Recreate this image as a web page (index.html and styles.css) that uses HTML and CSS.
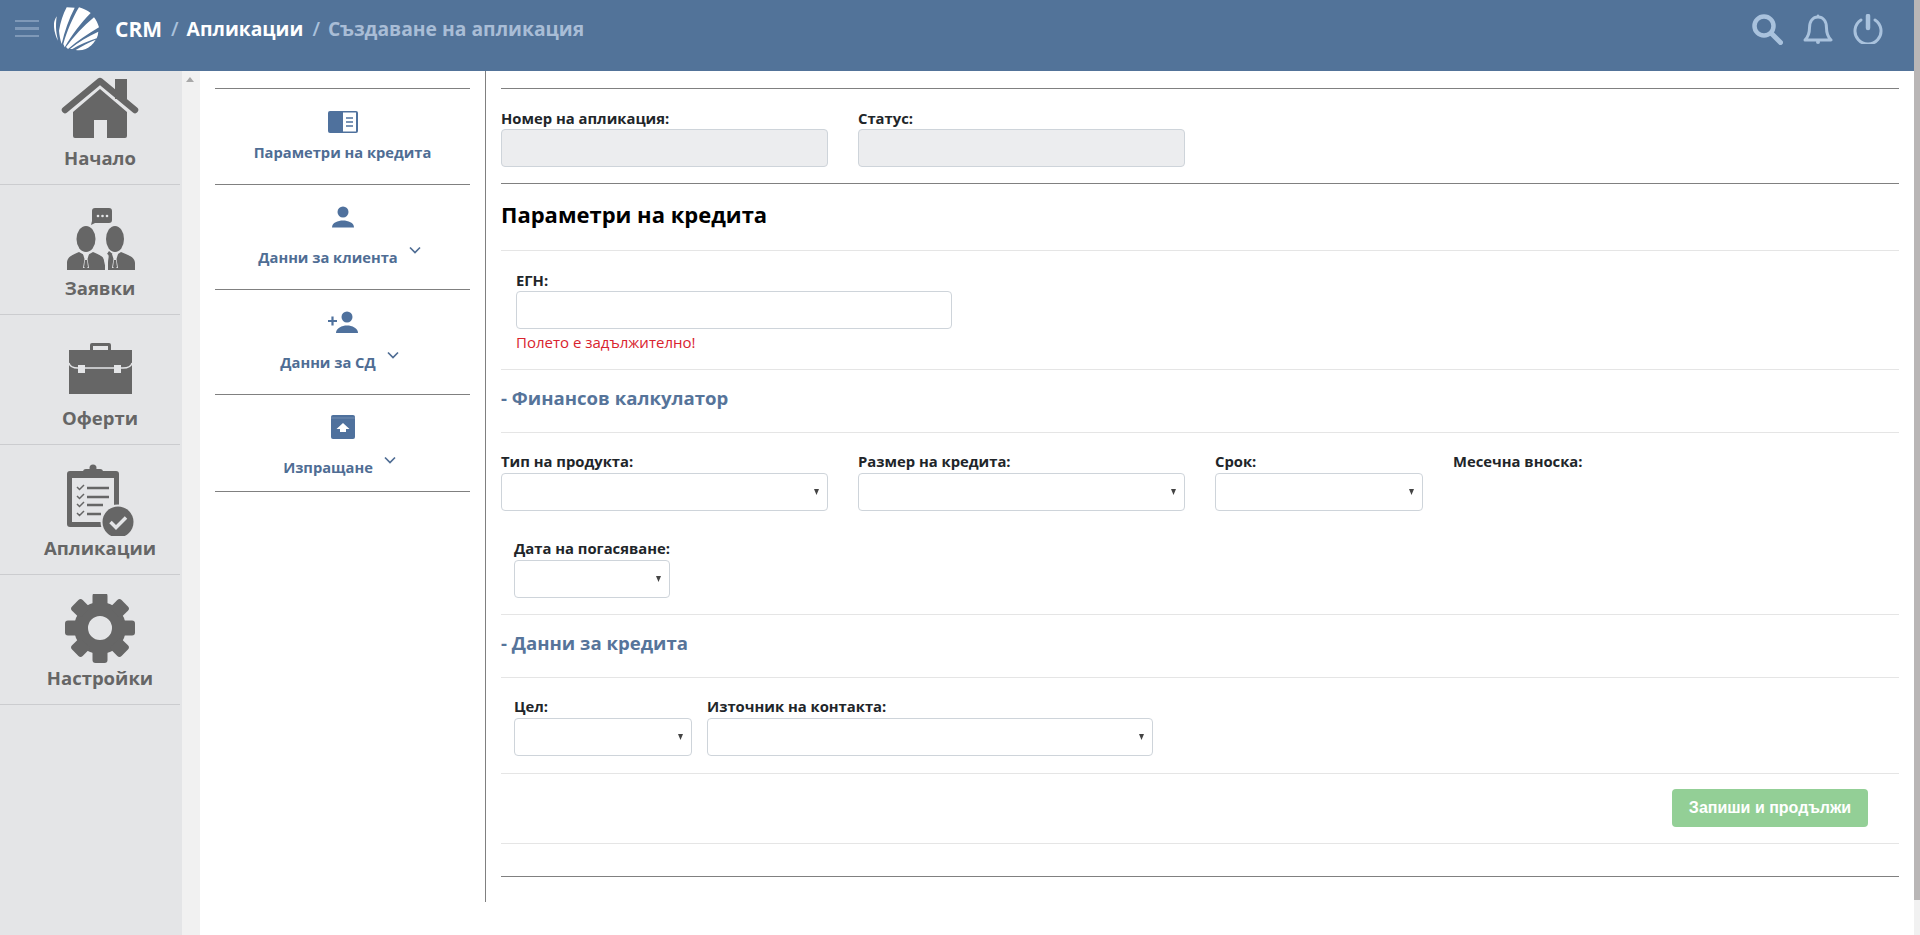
FILE: index.html
```html
<!DOCTYPE html>
<html lang="bg">
<head>
<meta charset="utf-8">
<title>CRM</title>
<link rel="stylesheet" href="styles.css">
</head>
<body>
<div class="page">
  <header class="topbar">
    <div class="burger"><span></span><span></span><span></span></div>
    <svg class="logo" viewBox="0 0 45 45" fill="#fff">
      <path d="M2.700 10.300 C0.500 14 -0.500 17 0 21 C0.300 26 2 31 4 34.700 C2.800 29 2 25 2 21 C2 17 2.200 14 2.700 10.300 Z"/>
      <path d="M12.700 1.300 L20.700 1.700 C15 13 10.500 25 7.700 38 C6.300 34 5.300 29 5 24.700 C6.500 16 9 8 12.700 1.300 Z"/>
      <path d="M25 1.300 C29 2.300 33 4.300 36.700 7 C27 17 17.500 29 10.700 41.300 L9.300 38 C13 25 18.500 12 25 1.300 Z"/>
      <path d="M40 11.300 C42.300 14.300 44 17.800 45 21.300 C34 27.500 23.500 35 14 43 L12 41 C20 30 29.500 20 40 11.300 Z"/>
      <path d="M44.300 25.700 C44.200 28 43.600 30.200 42.700 32.300 C34 35 26 38.500 18.300 43 L16 43 C24.500 36 34 30.300 44.300 25.700 Z"/>
      <path d="M41.700 33.700 C39 38.500 35.500 41.300 31.700 43 C28.300 44.300 25 44.500 21.700 44 C28 40 34.500 36.500 41.700 33.700 Z"/>
    </svg>
    <nav class="crumbs">
      <span class="crumb-on crumb-root">CRM</span><span class="crumb-sep">/</span><span class="crumb-on">Апликации</span><span class="crumb-sep">/</span><span class="crumb-off">Създаване на апликация</span>
    </nav>
    <div class="top-icons">
      <svg class="ic-search" viewBox="0 0 31 31" fill="none" stroke="#a9c2dd" stroke-linecap="round"><circle cx="12" cy="12" r="9.500" stroke-width="4.500"/><path d="M19.500 19.500 L28.500 28.500" stroke-width="5"/></svg>
      <svg class="ic-bell" viewBox="0 0 30 30" fill="none" stroke="#a9c2dd" stroke-width="3" stroke-linejoin="round"><path d="M2 26 C5 23 6.500 19 6.500 14 C6.500 7 10 3 15 3 C20 3 23.500 7 23.500 14 C23.500 19 25 23 28 26 Z"/><circle cx="15" cy="1.800" r="1.200" fill="#a9c2dd" stroke="none"/><circle cx="15" cy="28" r="2" fill="#a9c2dd" stroke="none"/></svg>
      <svg class="ic-power" viewBox="0 0 30 30" fill="none" stroke="#a9c2dd" stroke-linecap="round"><path d="M8 6 A13 13 0 1 0 22 6" stroke-width="3"/><path d="M15 2 V14" stroke-width="4.500"/></svg>
    </div>
  </header>
  <div class="lower">
    <aside class="rail">
      <ul class="rail-list">
        <li class="rail-item">
          <svg class="rail-icon" viewBox="0 0 80 72" fill="#666"><path d="M5 36 L40 7 L75 36" fill="none" stroke="#666" stroke-width="6.500" stroke-linecap="round" stroke-linejoin="round"/><rect x="55" y="5" width="12" height="20"/><path d="M40 15 L67 38 V62 Q67 64 65 64 H47 V46 H34 V64 H15 Q13 64 13 62 V38 Z"/></svg>
          <span class="rail-label">Начало</span>
        </li>
        <li class="rail-item">
          <svg class="rail-icon" viewBox="0 0 80 72" fill="#666"><path d="M35 4 H49 Q52 4 52 7 V16 Q52 19 49 19 H35 L31 21 L32 17 V7 Q32 4 35 4 Z"/><circle cx="38" cy="12" r="1.300" fill="#e4e5e7"/><circle cx="42.500" cy="12" r="1.300" fill="#e4e5e7"/><circle cx="47" cy="12" r="1.300" fill="#e4e5e7"/><ellipse cx="26" cy="35" rx="9.500" ry="13"/><ellipse cx="55" cy="35" rx="9" ry="13"/><path d="M7 66 V59 C7 53 12 51 19 48 L26 52 L33 48 C40 51 45 53 45 59 V66 Z"/><path d="M48 66 V59 C48 54 50 51 47 50 L49 47 L55 52 L61 48 C68 51 75 53 75 59 V66 Z"/><path d="M23 50 H29 L27.500 55 L29 64 H23 L24.500 55 Z" fill="#e4e5e7"/><path d="M25 56 H27 L28 63 L26 65 L24 63 Z"/><path d="M52 50 H58 L56.500 55 L58 64 H52 L53.500 55 Z" fill="#e4e5e7"/><path d="M54 56 H56 L57 63 L55 65 L53 63 Z"/><path d="M45 50 L47 66 H46 L43 52 Z" fill="#e4e5e7"/></svg>
          <span class="rail-label">Заявки</span>
        </li>
        <li class="rail-item">
          <svg class="rail-icon" viewBox="0 0 80 72" fill="#666"><path fill-rule="evenodd" d="M32 9 H49 Q51 9 51 11 V17 H48 V12 H33 V17 H30 V11 Q30 9 32 9 Z"/><rect x="9" y="16" width="63" height="44"/><path d="M9 29 C10 33 13 34 18 34 H63 C68 34 71 33 72 29" fill="none" stroke="#e4e5e7" stroke-width="1.300"/><rect x="18" y="31" width="7" height="8" fill="#e4e5e7"/><rect x="54" y="31" width="7" height="8" fill="#e4e5e7"/></svg>
          <span class="rail-label">Оферти</span>
        </li>
        <li class="rail-item">
          <svg class="rail-icon" viewBox="0 0 80 72" fill="#666"><rect x="7" y="7" width="52" height="56" rx="3"/><circle cx="33" cy="4" r="3.500"/><rect x="23" y="5" width="20" height="6" rx="3"/><rect x="12" y="14" width="42" height="44" fill="#e4e5e7"/><g fill="none" stroke="#666"><path d="M17 23 L19.500 25.500 L24 21 M17 32 L19.500 34.500 L24 30 M17 40 L19.500 42.500 L24 38 M17 49 L19.500 51.500 L24 47" stroke-width="1.500"/><path d="M27 24 H49 M27 33 H49 M27 41 H43 M27 50 H41" stroke-width="2.500"/></g><circle cx="58" cy="58" r="17.500" fill="#e4e5e7"/><circle cx="58" cy="58" r="15.500"/><path d="M50.500 58 L56 63.500 L66 53.500" fill="none" stroke="#e4e5e7" stroke-width="3.500"/></svg>
          <span class="rail-label">Апликации</span>
        </li>
        <li class="rail-item">
          <svg class="rail-icon" viewBox="0 0 80 72" fill="#666"><g transform="translate(40 34)"><path fill-rule="evenodd" d="M-26 0 A26 26 0 1 0 26 0 A26 26 0 1 0 -26 0 Z M-12 0 A12 12 0 1 1 12 0 A12 12 0 1 1 -12 0 Z"/><rect x="-7.500" y="-35" width="15" height="14" rx="3"/><rect x="-7.500" y="-35" width="15" height="14" rx="3" transform="rotate(45)"/><rect x="-7.500" y="-35" width="15" height="14" rx="3" transform="rotate(90)"/><rect x="-7.500" y="-35" width="15" height="14" rx="3" transform="rotate(135)"/><rect x="-7.500" y="-35" width="15" height="14" rx="3" transform="rotate(180)"/><rect x="-7.500" y="-35" width="15" height="14" rx="3" transform="rotate(225)"/><rect x="-7.500" y="-35" width="15" height="14" rx="3" transform="rotate(270)"/><rect x="-7.500" y="-35" width="15" height="14" rx="3" transform="rotate(315)"/></g></svg>
          <span class="rail-label">Настройки</span>
        </li>
      </ul>
    </aside>
    <div class="rail-track"><svg class="track-arrow" viewBox="0 0 8 5" fill="#a8a8a8"><path d="M4 0 L8 5 H0 Z"/></svg></div>
    <div class="workspace">
      <nav class="steps">
        <div class="step step-first">
          <svg class="step-icon" viewBox="0 0 30 24" fill="#4f719d"><path d="M2 1 H28 Q30 1 30 3 V21 Q30 23 28 23 H2 Q0 23 0 21 V3 Q0 1 2 1 Z"/><rect x="15" y="2.500" width="13" height="19" fill="#fff"/><path d="M18 8 H25 M18 12 H25 M18 16 H25" stroke="#4f719d" stroke-width="1.600"/></svg>
          <div class="step-label">Параметри на кредита</div>
        </div>
        <div class="step">
          <svg class="step-icon" viewBox="0 0 30 24" fill="#4f719d"><circle cx="15" cy="7" r="5.500"/><path d="M4 22.500 C4 17.500 10 15.500 15 15.500 C20 15.500 26 17.500 26 22.500 Z"/></svg>
          <div class="step-label">Данни за клиента<svg class="chev" viewBox="0 0 12 8" fill="none" stroke="#4f6d94" stroke-width="1.700"><path d="M1 1.500 L6 6.500 L11 1.500"/></svg></div>
        </div>
        <div class="step">
          <svg class="step-icon" viewBox="0 0 30 24" fill="#4f719d"><circle cx="19" cy="7" r="5.500"/><path d="M8 23 C8 18 14 15.500 19 15.500 C24 15.500 30 18 30 23 Z"/><path d="M0 11 H9 M4.500 6.500 V15.500" stroke="#4f719d" stroke-width="2.200"/></svg>
          <div class="step-label">Данни за СД<svg class="chev" viewBox="0 0 12 8" fill="none" stroke="#4f6d94" stroke-width="1.700"><path d="M1 1.500 L6 6.500 L11 1.500"/></svg></div>
        </div>
        <div class="step step-last">
          <svg class="step-icon" viewBox="0 0 30 24" fill="#4f719d"><path d="M5 0 H25 Q27 0 27 2 V22 Q27 24 25 24 H5 Q3 24 3 22 V2 Q3 0 5 0 Z"/><path d="M15 8 L21.500 14 H18 V17 H12 V14 H8.500 Z" fill="#fff"/><path d="M3 3 H27" stroke="#7f97b8" stroke-width=".8"/></svg>
          <div class="step-label">Изпращане<svg class="chev" viewBox="0 0 12 8" fill="none" stroke="#4f6d94" stroke-width="1.700"><path d="M1 1.500 L6 6.500 L11 1.500"/></svg></div>
        </div>
      </nav>
      <main class="main">
        <section class="block-ids">
          <div class="row">
            <div class="field col-3"><label class="lbl">Номер на апликация:</label><input class="ctl" type="text" disabled></div>
            <div class="field col-3"><label class="lbl">Статус:</label><input class="ctl" type="text" disabled></div>
          </div>
        </section>
        <h2 class="page-title">Параметри на кредита</h2>
        <section class="block-egn">
          <div class="field egn"><label class="lbl">ЕГН:</label><input class="ctl" type="text"><div class="err">Полето е задължително!</div></div>
        </section>
        <h3 class="sub-title">- Финансов калкулатор</h3>
        <section class="block-fields">
          <div class="row">
            <div class="field col-3"><label class="lbl">Тип на продукта:</label><select class="ctl sel"></select></div>
            <div class="field col-3"><label class="lbl">Размер на кредита:</label><select class="ctl sel"></select></div>
            <div class="field col-2"><label class="lbl">Срок:</label><select class="ctl sel"></select></div>
            <div class="field col-2"><label class="lbl">Месечна вноска:</label></div>
          </div>
          <div class="row row-inset row-next">
            <div class="field date"><label class="lbl">Дата на погасяване:</label><select class="ctl sel"></select></div>
          </div>
        </section>
        <h3 class="sub-title">- Данни за кредита</h3>
        <section class="block-fields block-purpose">
          <div class="row row-inset row-tight">
            <div class="field goal"><label class="lbl">Цел:</label><select class="ctl sel"></select></div>
            <div class="field source"><label class="lbl">Източник на контакта:</label><select class="ctl sel"></select></div>
          </div>
        </section>
        <div class="actions"><button class="save" type="button" disabled>Запиши и продължи</button></div>
        <hr class="end-rule">
      </main>
    </div>
  </div>
</div>
<div class="page-scroll"><div class="page-thumb"></div></div>
</body>
</html>
```

FILE: styles.css
```css
* { box-sizing: border-box; }
html, body { margin: 0; height: 935px; overflow: hidden; }
body { display: flex; width: 1920px; background: #fff; font-family: "Open Sans", "Noto Sans", sans-serif; color: #212529; }
.page { width: 1914px; height: 935px; display: flex; flex-direction: column; }
.page-scroll { width: 6px; height: 935px; background: #f1f1f1; }
.page-thumb { height: 900px; background: #b9b6b6; }

.topbar { height: 71px; flex: none; background: #527399; display: flex; align-items: center; padding: 0 31px 14px 15px; }
.burger { width: 24px; display: flex; flex-direction: column; gap: 5px; }
.burger span { height: 2.500px; background: #7f99b8; }
.logo { width: 45px; height: 45px; margin-left: 15px; flex: none; }
.crumbs { margin-left: 16px; font-size: 19.300px; font-weight: 700; line-height: 28px; display: flex; white-space: nowrap; }
.crumb-on { color: #fff; }
.crumb-root { font-size: 21px; }
.crumb-sep { color: #a9c1dc; font-weight: 600; margin: 0 8px 0 9px; }
.crumb-off { color: #a9bdd6; }
.top-icons { margin-left: auto; display: flex; align-items: center; gap: 20px; padding-top: 1px; }
.ic-search { width: 31px; height: 31px; }
.ic-bell { width: 30px; height: 30px; }
.ic-power { width: 30px; height: 30px; }

.lower { flex: 1; display: flex; min-height: 0; }
.rail { width: 182px; flex: none; background: #e4e5e7; overflow: hidden; }
.rail-list { list-style: none; margin: -16px 0 0; padding: 0; }
.rail-item { width: 180px; height: 130px; padding: 19px 0 0 20px; border-bottom: 1px solid #cbcccf; display: flex; flex-direction: column; align-items: center; }
.rail-icon { width: 80px; height: 72px; flex: none; display: block; }
.rail-label { font-size: 18.500px; font-weight: 700; line-height: 26px; color: #666; margin-top: -1px; }
.rail-track { width: 18px; flex: none; background: #f1f1f1; padding: 6px 0 0 4px; }
.track-arrow { display: block; width: 8px; height: 5px; }

.workspace { width: 1714px; height: 831px; display: flex; }
.steps { width: 285px; flex: none; padding: 17px 15px 0; }
.step { border-bottom: 1px solid #808080; padding: 20px 0 22px; text-align: center; }
.step-first { border-top: 1px solid #808080; padding-top: 21px; }
.step-last { padding-bottom: 14px; }
.step-icon { display: block; width: 30px; height: 24px; margin: 0 auto 18px; }
.step-first .step-icon { margin-bottom: 8px; }
.step-label { font-size: 14.700px; font-weight: 700; line-height: 20px; color: #4f6d94; display: flex; justify-content: center; padding-right: 6px; }
.step-first .step-label { padding-right: 0; }
.chev { width: 12px; height: 8px; margin: -1px 0 0 11px; flex: none; }

.main { flex: 1; min-width: 0; border-left: 1px solid #808080; padding: 17px 15px 0; }
.block-ids { border-top: 1px solid #808080; border-bottom: 1px solid #808080; padding: 19px 0 16px; }
.row { display: flex; gap: 30px; }
.field { display: block; }
.col-3 { width: 327px; }
.col-2 { width: 208px; }
.lbl { display: block; font-size: 14.800px; font-weight: 700; line-height: 20px; margin-bottom: 1px; color: #212529; }
.ctl { display: block; width: 100%; height: 38px; border: 1px solid #ced4da; border-radius: 4px; background: #fff; padding: 0 12px; margin: 0; font-family: inherit; font-size: 14px; }
.ctl:disabled { background: #ecedef; }
.sel { appearance: none; -webkit-appearance: none; background: #fff url("data:image/svg+xml,%3Csvg xmlns='http://www.w3.org/2000/svg' width='5' height='6'%3E%3Cpath d='M0 0H5L2.500 6Z' fill='%23444'/%3E%3C/svg%3E") no-repeat right 8px center; }

.page-title { margin: 0; font-size: 22px; font-weight: 700; line-height: 30px; color: #000; padding: 15px 0 21px; border-bottom: 1px solid #e5e5e5; }
.block-egn { padding: 19px 0 17px 15px; border-bottom: 1px solid #e5e5e5; }
.egn { width: 436px; }
.err { font-size: 15px; line-height: 20px; color: #d9232e; margin-top: 3px; }
.sub-title { margin: 0; font-size: 18.600px; font-weight: 700; line-height: 30px; color: #56749a; padding: 13px 0 19px; border-bottom: 1px solid #e5e5e5; }
.block-fields { padding: 18px 0 16px; border-bottom: 1px solid #e5e5e5; }
.block-fields .lbl { margin-bottom: 2px; }
.row-next { margin-top: 27px; }
.row-inset { padding-left: 13px; }
.date { width: 156px; }
.block-purpose { padding-bottom: 17px; }
.row-tight { gap: 15px; }
.goal { width: 178px; }
.source { width: 446px; }
.actions { display: flex; justify-content: flex-end; padding: 15px 31px 16px 0; border-bottom: 1px solid #e5e5e5; }
.save { width: 196px; height: 38px; border: 0; border-radius: 4px; background: #93cf96; color: #fff; font-family: "Liberation Sans", Arial, sans-serif; font-size: 16px; font-weight: 700; padding: 0; }
.end-rule { margin: 32px 0 0; border: 0; border-top: 1px solid #808080; }
```
